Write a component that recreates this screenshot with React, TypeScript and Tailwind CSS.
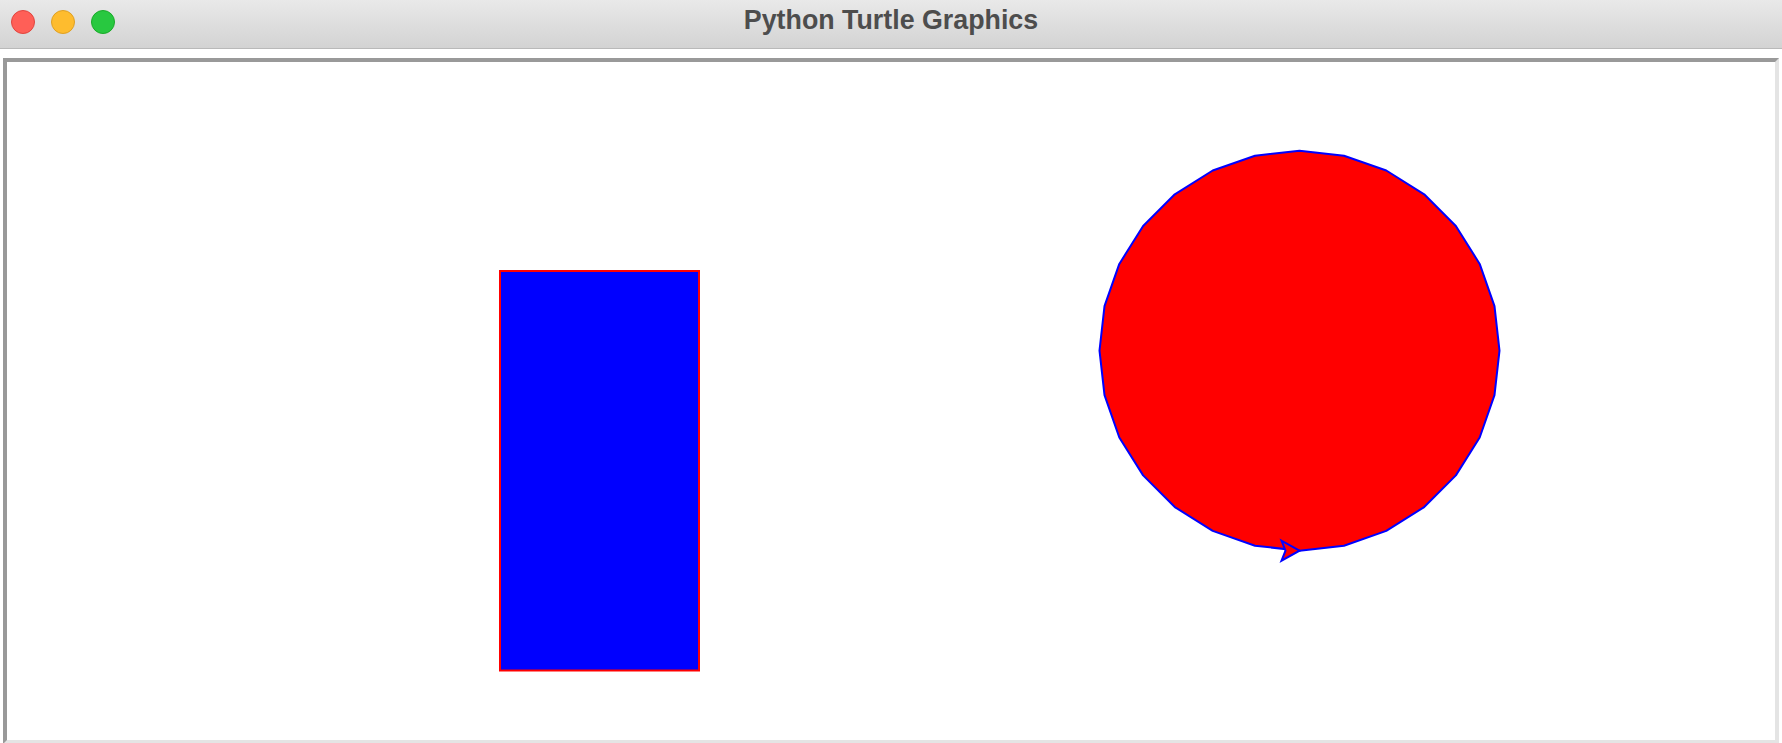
import React from 'react';

// turtle.circle(100) on a 2x display: 28 chords, radius 200px
const cx = 1299.5;
const cy = 350.7;
const r = 200;
const steps = 28;

const circlePoints = Array.from({ length: steps }, (_, i) => {
	const a = ((-90 + (i * 360) / steps) * Math.PI) / 180;
	return `${(cx + r * Math.cos(a)).toFixed(2)},${(cy - r * Math.sin(a)).toFixed(2)}`;
}).join(' ');

// classic arrow, pointing east, tip at the turtle position
const tx = cx;
const ty = cy + r;
const arrow = [
	[0, 0],
	[-18, -10],
	[-14, 0],
	[-18, 10],
]
	.map(([x, y]) => `${tx + x},${ty + y}`)
	.join(' ');

function TitleBar() {
	return (
		<div className="grid h-[49px] grid-cols-[1fr_auto_1fr] border-b border-[#b9b9b9] bg-gradient-to-b from-[#e9e9e9] to-[#d3d3d3]">
			<div className="flex gap-4 pl-[11px] pt-[10px]">
				<span className="h-6 w-6 rounded-full border border-[#e1453e] bg-[#ff5f57]" />
				<span className="h-6 w-6 rounded-full border border-[#dfa023] bg-[#febc2e]" />
				<span className="h-6 w-6 rounded-full border border-[#1aab29] bg-[#28c840]" />
			</div>
			<div className="pt-[7px] font-['Liberation_Sans',sans-serif] text-[26.8px] leading-[26px] font-bold text-[#4d4d4d]">
				Python Turtle Graphics
			</div>
			<div />
		</div>
	);
}

export default function App() {
	return (
		<div className="h-[743px] w-full overflow-hidden bg-white">
			<TitleBar />
			<div className="mx-[3px] mt-[9px] h-[686px] border-4 border-t-[#999999] border-l-[#999999] border-r-[#e4e4e4] border-b-[#e4e4e4] bg-white">
				<svg width="1768" height="678" viewBox="7 62 1768 678" className="block">
					<rect x="500" y="271" width="199" height="399.5" fill="#0000ff" stroke="#ff0000" strokeWidth="2" />
					<polygon points={circlePoints} fill="#ff0000" stroke="#0000ff" strokeWidth="2" strokeLinejoin="round" />
					<polygon points={arrow} fill="#ff0000" stroke="#0000ff" strokeWidth="2" strokeLinejoin="miter" />
				</svg>
			</div>
		</div>
	);
}
